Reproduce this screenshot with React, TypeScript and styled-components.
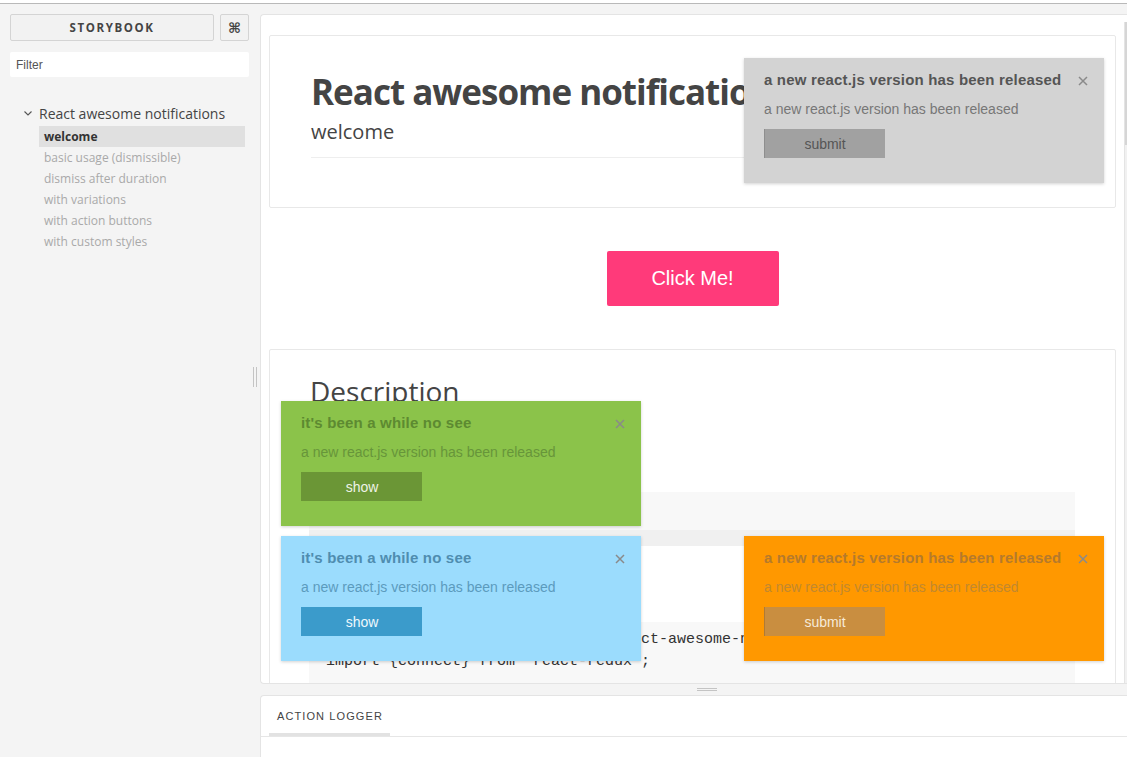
import React from 'react'
import styled, { createGlobalStyle } from 'styled-components'

const Global = createGlobalStyle`
  html, body {
    margin: 0;
    padding: 0;
    height: 100%;
    overflow: hidden;
  }
  #root {
    height: 100%;
  }
  * {
    box-sizing: border-box;
  }
`

const uiFont = `"Open Sans", "Noto Sans", sans-serif`
const arial = `"Liberation Sans", Arial, sans-serif`

const Frame = styled.div`
  height: 100vh;
  display: flex;
  flex-direction: column;
  background: #f4f4f4;
`

const TopBar = styled.div`
  height: 4px;
  flex: none;
  background: #fff;
  border-bottom: 1px solid #b9b9b9;
`

const Body = styled.div`
  flex: 1;
  display: flex;
  min-height: 0;
`

// ---- sidebar ----
const Sidebar = styled.aside`
  width: 250px;
  flex: none;
  padding: 10px 1px 0 10px;
  font-family: ${uiFont};
`

const HeaderRow = styled.div`
  display: flex;
  gap: 6px;
  height: 27px;
`

const HeaderButton = styled.div<{ $square?: boolean }>`
  flex: ${p => (p.$square ? '0 0 29px' : '1')};
  display: flex;
  align-items: center;
  justify-content: center;
  border: 1px solid #d4d4d4;
  border-radius: 2px;
  background: #f2f2f2;
  color: #444;
  font-weight: 700;
  font-size: ${p => (p.$square ? '14px' : '11.5px')};
  letter-spacing: ${p => (p.$square ? '0' : '1.6px')};
  font-family: ${p => (p.$square ? `"DejaVu Sans", sans-serif` : uiFont)};
`

const FilterInput = styled.input`
  display: block;
  width: 100%;
  height: 25px;
  margin-top: 11px;
  border: none;
  border-radius: 2px;
  background: #fff;
  padding: 0 6px;
  font-family: ${arial};
  font-size: 12px;
  color: #555;
  outline: none;
  &::placeholder {
    color: #555;
  }
`

const Tree = styled.div`
  margin-top: 26px;
`

const KindRow = styled.div`
  display: flex;
  align-items: center;
  height: 20px;
  padding-left: 14px;
  gap: 7px;
  font-size: 14px;
  color: #444;
`

const StoryList = styled.ul`
  list-style: none;
  margin: 3px 0 0 29px;
  padding: 0;
  width: 206px;
`

const StoryItem = styled.li<{ $active?: boolean }>`
  height: 21px;
  line-height: 21px;
  padding-left: 5px;
  font-size: 12px;
  color: ${p => (p.$active ? '#333' : '#a9a9a9')};
  font-weight: ${p => (p.$active ? 700 : 400)};
  background: ${p => (p.$active ? '#e0e0e0' : 'transparent')};
`

const VResizer = styled.div`
  width: 10px;
  flex: none;
  display: flex;
  align-items: center;
  justify-content: center;
  gap: 2px;
  padding-bottom: 8px;
`

const Grip = styled.span<{ $horizontal?: boolean }>`
  display: block;
  background: #c4c4c4;
  width: ${p => (p.$horizontal ? '20px' : '1px')};
  height: ${p => (p.$horizontal ? '1px' : '20px')};
`

// ---- main ----
const Main = styled.main`
  flex: 1;
  min-width: 0;
  display: flex;
  flex-direction: column;
  padding-top: 10px;
`

const PreviewPanel = styled.section`
  position: relative;
  height: 670px;
  flex: none;
  display: flex;
  background: #fff;
  border: 1px solid #e4e4e4;
  border-right: none;
  border-radius: 4px 0 0 4px;
  overflow: hidden;
`

const PreviewScroll = styled.div`
  flex: 1;
  min-width: 0;
  padding: 20px 8px 0 8px;
`

const ScrollTrack = styled.div`
  width: 3px;
  flex: none;
  margin-top: 7px;
  background: #f1f1f1;
  border-left: 1px solid #e4e4e4;
`

const ScrollThumb = styled.div`
  height: 123px;
  background: #d6d6d6;
`

const Card = styled.div<{ $tall?: boolean }>`
  border: 1px solid #e8e8e8;
  border-radius: 2px;
  padding: ${p => (p.$tall ? '23px 40px 40px 40px' : '36px 40px 49px 41px')};
  font-family: ${uiFont};
  color: #444;
`

const Title = styled.h1`
  margin: 0;
  font-size: 35px;
  line-height: 40px;
  font-weight: 700;
  white-space: nowrap;
  color: #444;
  letter-spacing: -1px;
`

const Subtitle = styled.h2`
  margin: 7px 0 0;
  font-size: 20px;
  line-height: 26px;
  font-weight: 400;
  color: #444;
`

const Rule = styled.hr`
  margin: 12px 0 0;
  border: none;
  border-top: 1px solid #eee;
`

const SectionHeading = styled.h2`
  margin: 0;
  font-size: 28px;
  line-height: 36px;
  font-weight: 400;
  color: #444;
`

const CodeBlock = styled.pre<{ $top: number }>`
  margin: ${p => p.$top}px 0 0 -1px;
  padding: 7px 17px 0;
  background: #f8f8f8;
  font-family: "Liberation Mono", "Courier New", monospace;
  font-size: 15px;
  line-height: 22px;
  color: #333;
  overflow: hidden;
  white-space: pre;
`

const ScrollStrip = styled.div`
  height: 16px;
  margin-top: 9px;
  background: #f0f0f0;
  margin-left: -17px;
  margin-right: -17px;
`

const ButtonRow = styled.div`
  display: flex;
  justify-content: center;
  margin: 43px 0;
`

const ClickButton = styled.button`
  width: 172px;
  height: 55px;
  border: none;
  border-radius: 2px;
  background: #ff3a7a;
  color: #fff;
  font-family: ${arial};
  font-size: 20px;
`

const HResizer = styled.div`
  height: 11px;
  flex: none;
  display: flex;
  flex-direction: column;
  align-items: center;
  justify-content: center;
  gap: 1px;
  padding: 0 0 0 26px;
`

const AddonPanel = styled.section`
  flex: 1;
  background: #fff;
  border: 1px solid #e4e4e4;
  border-right: none;
  border-bottom: none;
  border-radius: 4px 0 0 0;
`

const TabBar = styled.div`
  height: 41px;
  display: flex;
  align-items: flex-end;
  padding-left: 8px;
  border-bottom: 1px solid #e6e6e6;
`

const Tab = styled.div`
  width: 121px;
  height: 100%;
  display: flex;
  align-items: center;
  padding: 2px 0 0 8px;
  border-bottom: 3px solid #e2e2e2;
  font-family: ${arial};
  font-size: 11px;
  letter-spacing: 1.1px;
  color: #444;
`

// ---- notifications ----
type Variant = 'gray' | 'green' | 'blue' | 'orange'

const palette: Record<Variant, { bg: string; title: string; text: string; btn: string; btnText: string; btnEdge: string }> = {
  gray: { bg: '#d3d3d3', title: '#555', text: '#777', btn: '#a1a1a1', btnText: '#555', btnEdge: '#8e8e8e' },
  green: { bg: '#8bc34a', title: '#5d8a31', text: '#67953a', btn: '#6b9636', btnText: '#eef3e6', btnEdge: '#6b9636' },
  blue: { bg: '#9bdcfd', title: '#4f8db0', text: '#5c9bbd', btn: '#3b9bcb', btnText: '#eef8fd', btnEdge: '#3b9bcb' },
  orange: { bg: '#ff9800', title: '#b57a2c', text: '#c2882f', btn: '#c98e40', btnText: '#f6ead9', btnEdge: '#b07a35' },
}

const Stack = styled.div<{ $corner: 'tr' | 'bl' | 'br' }>`
  position: absolute;
  display: flex;
  flex-direction: column;
  gap: 10px;
  ${p => (p.$corner === 'tr' ? 'top: 43px;' : 'bottom: 22px;')}
  ${p => (p.$corner === 'bl' ? 'left: 20px;' : 'right: 23px;')}
`

const Toast = styled.div<{ $v: Variant }>`
  width: 360px;
  height: 125px;
  padding: 12px 20px 0;
  background: ${p => palette[p.$v].bg};
  box-shadow: 0 1px 3px rgba(0, 0, 0, 0.18);
  font-family: ${arial};
`

const ToastHead = styled.div`
  display: flex;
  align-items: center;
  justify-content: space-between;
  height: 18px;
`

const ToastTitle = styled.div<{ $v: Variant }>`
  font-size: 15px;
  font-weight: 700;
  letter-spacing: 0.18px;
  color: ${p => palette[p.$v].title};
`

const CloseIcon = styled.svg`
  margin-right: -4px;
  margin-top: 3px;
`

const ToastText = styled.div<{ $v: Variant }>`
  margin-top: 13px;
  font-size: 14px;
  line-height: 16px;
  color: ${p => palette[p.$v].text};
`

const ToastButton = styled.button<{ $v: Variant }>`
  display: block;
  margin-top: 12px;
  width: 121px;
  height: 29px;
  border: none;
  border-left: 1px solid ${p => palette[p.$v].btnEdge};
  background: ${p => palette[p.$v].btn};
  color: ${p => palette[p.$v].btnText};
  font-family: ${arial};
  font-size: 14px;
  padding: 0;
`

const Notification = ({ v, title, action }: { v: Variant; title: string; action: string }) => (
  <Toast $v={v}>
    <ToastHead>
      <ToastTitle $v={v}>{title}</ToastTitle>
      <CloseIcon width="10" height="10" viewBox="0 0 10 10">
        <path d="M1 1 L9 9 M9 1 L1 9" stroke="#8a8a8a" strokeWidth="1.5" />
      </CloseIcon>
    </ToastHead>
    <ToastText $v={v}>a new react.js version has been released</ToastText>
    <ToastButton $v={v}>{action}</ToastButton>
  </Toast>
)

const stories = [
  'welcome',
  'basic usage (dismissible)',
  'dismiss after duration',
  'with variations',
  'with action buttons',
  'with custom styles',
]

const released = 'a new react.js version has been released'
const whileNoSee = "it's been a while no see"

export default function App() {
  return (
    <>
      <Global />
      <Frame>
        <TopBar />
        <Body>
          <Sidebar>
            <HeaderRow>
              <HeaderButton>STORYBOOK</HeaderButton>
              <HeaderButton $square>⌘</HeaderButton>
            </HeaderRow>
            <FilterInput placeholder="Filter" />
            <Tree>
              <KindRow>
                <svg width="8" height="5" viewBox="0 0 8 5">
                  <path d="M0.5 0.5 L4 4 L7.5 0.5" fill="none" stroke="#555" strokeWidth="1.1" />
                </svg>
                React awesome notifications
              </KindRow>
              <StoryList>
                {stories.map((s, i) => (
                  <StoryItem key={s} $active={i === 0}>
                    {s}
                  </StoryItem>
                ))}
              </StoryList>
            </Tree>
          </Sidebar>
          <VResizer>
            <Grip />
            <Grip />
          </VResizer>
          <Main>
            <PreviewPanel>
              <PreviewScroll>
                <Card>
                  <Title>React awesome notifications</Title>
                  <Subtitle>welcome</Subtitle>
                  <Rule />
                </Card>
                <ButtonRow>
                  <ClickButton>Click Me!</ClickButton>
                </ButtonRow>
                <Card $tall>
                  <SectionHeading>Description</SectionHeading>
                  <CodeBlock $top={83}>
                    {' '}
                    <ScrollStrip />
                  </CodeBlock>
                  <CodeBlock $top={76}>
                    {"import NotificationSystem from 'react-awesome-notifications';\nimport {connect} from 'react-redux';\n\n"}
                  </CodeBlock>
                </Card>
              </PreviewScroll>
              <ScrollTrack>
                <ScrollThumb />
              </ScrollTrack>
              <Stack $corner="tr">
                <Notification v="gray" title={released} action="submit" />
              </Stack>
              <Stack $corner="bl">
                <Notification v="green" title={whileNoSee} action="show" />
                <Notification v="blue" title={whileNoSee} action="show" />
              </Stack>
              <Stack $corner="br">
                <Notification v="orange" title={released} action="submit" />
              </Stack>
            </PreviewPanel>
            <HResizer>
              <Grip $horizontal />
              <Grip $horizontal />
            </HResizer>
            <AddonPanel>
              <TabBar>
                <Tab>ACTION LOGGER</Tab>
              </TabBar>
            </AddonPanel>
          </Main>
        </Body>
      </Frame>
    </>
  )
}
